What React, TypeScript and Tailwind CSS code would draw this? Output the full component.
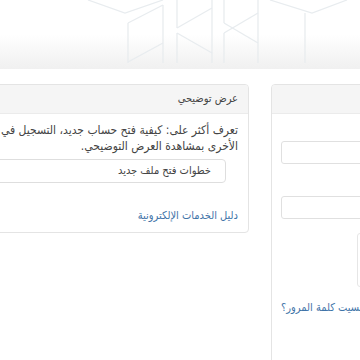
import React from "react";

const font = { fontFamily: '"DejaVu Sans Condensed", "DejaVu Sans", sans-serif' };

function Pattern() {
  const s = "#e8ecef";
  return (
    <svg className="absolute inset-0" width="360" height="69" viewBox="0 0 360 69">
      <g stroke={s} strokeWidth="1.3" fill="none">
        <polyline points="88,0 125,13 163,0" />
        <line x1="128" y1="23" x2="163" y2="5" />
        <line x1="128" y1="23" x2="128" y2="63" />
        <line x1="163" y1="5" x2="163" y2="63" />
        <line x1="128" y1="62" x2="163" y2="43" />
        <line x1="177" y1="0" x2="177" y2="28" />
        <line x1="177" y1="28" x2="212" y2="8" />
        <line x1="212" y1="0" x2="212" y2="63" />
        <line x1="177" y1="33" x2="177" y2="63" />
        <line x1="177" y1="33" x2="212" y2="53" />
        <line x1="224" y1="0" x2="224" y2="23" />
        <line x1="224" y1="23" x2="258" y2="43" />
        <line x1="258" y1="0" x2="258" y2="63" />
        <line x1="224" y1="33" x2="224" y2="63" />
        <line x1="224" y1="33" x2="258" y2="13" />
        <polyline points="270,0 312,13 347,0" />
        <line x1="305" y1="13" x2="305" y2="63" />
      </g>
    </svg>
  );
}

export default function App() {
  return (
    <div className="w-[360px] h-[360px] overflow-hidden bg-white text-[#555]" style={font}>
      <div className="relative h-[69px] bg-gradient-to-b from-white via-white to-[#f0f0f0]">
        <Pattern />
      </div>
      <div className="flex gap-[22px] mt-[15px] ml-[-151px]">
        {/* left panel */}
        <div dir="rtl" className="w-[400px] shrink-0 h-[149px] border border-[#e4e4e4] rounded-[4px] overflow-hidden">
          <div className="h-[29px] bg-[#f5f5f5] border-b border-[#ebebeb] px-[10px] flex items-center text-[11px] text-[#444]">
            عرض توضيحي
          </div>
          <div className="px-[10px] pt-[8px]">
            <p className="text-[12px] leading-[16px] whitespace-nowrap text-[#444]">
              تعرف أكثر على: كيفية فتح حساب جديد، التسجيل في الخدمات الإلكترونية والخدمات
              <br />
              الأخرى بمشاهدة العرض التوضيحي.
            </p>
            <div className="mt-[5px] mr-[12px] w-[300px] h-[24px] border border-[#dedede] rounded-[4px] flex items-center pr-[14px] text-[11px] text-[#444]">
              خطوات فتح ملف جديد
            </div>
            <div className="mt-[25px] text-[11px] leading-[16px] text-[#3f74a8]">
              دليل الخدمات الإلكترونية
            </div>
          </div>
        </div>
        {/* right panel */}
        <div className="w-[320px] shrink-0 h-[300px] border border-[#e4e4e4] rounded-[4px] overflow-hidden">
          <div className="h-[29px] bg-[#f5f5f5] border-b border-[#ebebeb]" />
          <div className="px-[9px]">
            <div className="mt-[27px] h-[23px] border border-[#e0e0e0] rounded-[3px]" />
            <div className="mt-[32px] h-[23px] border border-[#e0e0e0] rounded-[3px]" />
            <div className="mt-[14px] ml-[76px] h-[54px] border border-[#e6e6e6] rounded-[3px]" />
            <div dir="rtl" className="mt-[13px] text-left text-[11px] leading-[16px] text-[#3f74a8]">
              <span>هل نسيت كلمة المرور؟</span>
            </div>
          </div>
        </div>
      </div>
    </div>
  );
}
